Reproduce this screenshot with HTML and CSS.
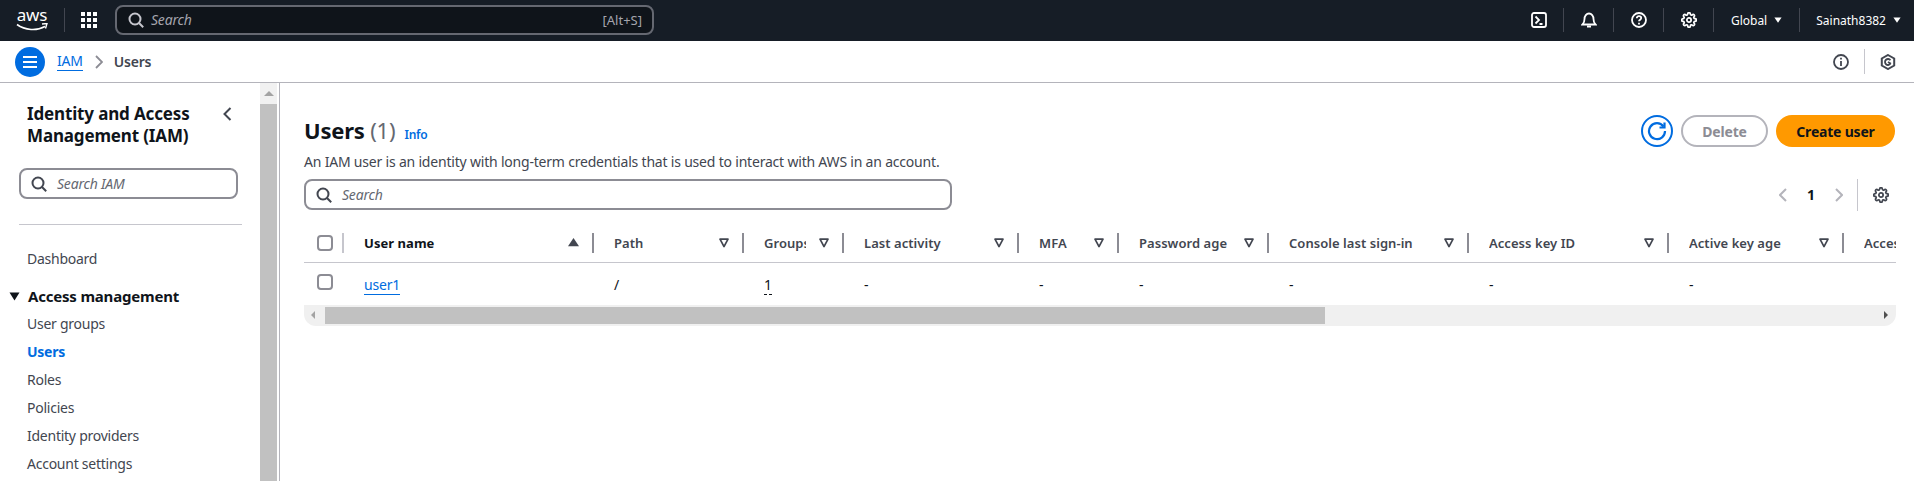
FILE: index.html
```html
<!DOCTYPE html>
<html lang="en">
<head>
  <meta charset="UTF-8">
  <meta name="viewport" content="width=device-width, initial-scale=1.0">
  <link rel="stylesheet" href="styles.css">
  <title>Users | IAM</title>
</head>
<body>
  <svg class="sprites" aria-hidden="true">
    <symbol id="gear" viewBox="0 0 24 24">
      <circle cx="12" cy="12" r="3.2" fill="none" stroke="currentColor" stroke-width="2.6"/>
      <path fill="none" stroke="currentColor" stroke-width="2.6" stroke-linejoin="round" d="M19.4 15a1.65 1.65 0 0 0 .33 1.82l.06.06a2 2 0 0 1 0 2.83 2 2 0 0 1-2.83 0l-.06-.06a1.65 1.65 0 0 0-1.82-.33 1.65 1.65 0 0 0-1 1.51V21a2 2 0 0 1-2 2 2 2 0 0 1-2-2v-.09A1.65 1.65 0 0 0 9 19.4a1.65 1.65 0 0 0-1.82.33l-.06.06a2 2 0 0 1-2.83 0 2 2 0 0 1 0-2.83l.06-.06a1.65 1.65 0 0 0 .33-1.82 1.65 1.65 0 0 0-1.51-1H3a2 2 0 0 1-2-2 2 2 0 0 1 2-2h.09A1.65 1.65 0 0 0 4.6 9a1.65 1.65 0 0 0-.33-1.82l-.06-.06a2 2 0 0 1 0-2.83 2 2 0 0 1 2.83 0l.06.06a1.65 1.65 0 0 0 1.82.33H9a1.65 1.65 0 0 0 1-1.51V3a2 2 0 0 1 2-2 2 2 0 0 1 2 2v.09a1.65 1.65 0 0 0 1 1.51 1.65 1.65 0 0 0 1.82-.33l.06-.06a2 2 0 0 1 2.83 0 2 2 0 0 1 0 2.83l-.06.06a1.65 1.65 0 0 0-.33 1.82V9a1.65 1.65 0 0 0 1.51 1H21a2 2 0 0 1 2 2 2 2 0 0 1-2 2h-.09a1.65 1.65 0 0 0-1.51 1z"/>
    </symbol>
    <symbol id="search" viewBox="0 0 16 16">
      <circle cx="7" cy="7" r="5.5" fill="none" stroke="currentColor" stroke-width="2"/>
      <path d="M11 11l4.2 4.2" fill="none" stroke="currentColor" stroke-width="2"/>
    </symbol>
    <symbol id="filter" viewBox="0 0 10 10">
      <path d="M1 1.2h8L5 8.6z" fill="none" stroke="currentColor" stroke-width="1.7" stroke-linejoin="round"/>
    </symbol>
    <symbol id="caret" viewBox="0 0 10 10">
      <path d="M0.5 2h9L5 8.5z" fill="currentColor"/>
    </symbol>
    <symbol id="caret-up" viewBox="0 0 10 10">
      <path d="M0 8.5h10L5 1z" fill="currentColor"/>
    </symbol>
  </svg>

  <header class="topbar">
    <div class="logo">
      <span class="logo-text">aws</span>
      <svg class="logo-smile" width="32" height="9" viewBox="0 0 32 9"><path d="M1 1.5c8 6 20 6.500 28 2" fill="none" stroke="#fff" stroke-width="1.600"/><path d="M26 1l5-.5-1.500 5" fill="none" stroke="#fff" stroke-width="1.400"/></svg>
    </div>
    <span class="top-sep logo-sep"></span>
    <svg class="apps" width="16" height="16" viewBox="0 0 16 16" fill="#fff">
      <rect x="0" y="0" width="4" height="4"/><rect x="6" y="0" width="4" height="4"/><rect x="12" y="0" width="4" height="4"/>
      <rect x="0" y="6" width="4" height="4"/><rect x="6" y="6" width="4" height="4"/><rect x="12" y="6" width="4" height="4"/>
      <rect x="0" y="12" width="4" height="4"/><rect x="6" y="12" width="4" height="4"/><rect x="12" y="12" width="4" height="4"/>
    </svg>
    <div class="top-search">
      <svg width="16" height="16"><use href="#search"/></svg>
      <span class="top-search-text">Search</span>
      <span class="shortcut">[Alt+S]</span>
    </div>
    <div class="top-actions">
      <svg class="top-icon" width="16" height="16" viewBox="0 0 16 16" fill="none" stroke="#fff" stroke-width="1.800"><rect x="1" y="1" width="14" height="14" rx="2"/><path d="M4.500 4.500L8 8l-3.500 3.500M8.500 12h3"/></svg>
      <span class="top-sep"></span>
      <svg class="top-icon" width="16" height="16" viewBox="0 0 16 16" fill="none" stroke="#fff" stroke-width="1.800"><path d="M1.500 12.500h13c-1.500-1.500-2-2.500-2-5.500 0-3-2-5.500-4.500-5.500S3.500 4 3.500 7c0 3-.5 4-2 5.500z"/><path d="M6 14.500h4" stroke-width="2"/></svg>
      <span class="top-sep"></span>
      <svg class="top-icon" width="16" height="16" viewBox="0 0 16 16" fill="none" stroke="#fff" stroke-width="1.800"><circle cx="8" cy="8" r="7"/><path d="M5.800 6.200C5.800 4.900 6.800 4.200 8 4.200s2.200.8 2.200 1.900c0 1.600-2.200 1.700-2.200 3.200"/><path d="M8 10.800v1.600"/></svg>
      <span class="top-sep"></span>
      <svg class="top-icon gear-white" width="16" height="16"><use href="#gear"/></svg>
      <span class="top-sep"></span>
      <button class="top-menu">Global <svg width="8" height="8"><use href="#caret"/></svg></button>
      <span class="top-sep"></span>
      <button class="top-menu">Sainath8382 <svg width="8" height="8"><use href="#caret"/></svg></button>
    </div>
  </header>

  <div class="crumbbar">
    <button class="menu-btn" aria-label="Open menu">
      <svg width="14" height="12" viewBox="0 0 14 12" fill="#fff"><rect width="14" height="2"/><rect y="5" width="14" height="2"/><rect y="10" width="14" height="2"/></svg>
    </button>
    <a class="crumb-link" href="#">IAM</a>
    <svg class="crumb-chevron" width="8" height="14" viewBox="0 0 8 14"><path d="M1 1l6 6-6 6" fill="none" stroke="#8c8c94" stroke-width="1.800"/></svg>
    <span class="crumb-current">Users</span>
    <div class="crumb-tools">
      <svg width="16" height="16" viewBox="0 0 16 16" fill="none" stroke="#424650" stroke-width="1.800"><circle cx="8" cy="8" r="7"/><path d="M8 7v5M8 3.800v1.800"/></svg>
      <span class="crumb-sep"></span>
      <svg width="16" height="16" viewBox="0 0 16 16" fill="none" stroke="#424650" stroke-width="2"><path d="M8 1l6.200 3.500v7L8 15l-6.200-3.500v-7z"/><path d="M10.400 6.200A3 3 0 1 0 10.400 9.800M8 8l3 1.800" stroke-width="1.800"/></svg>
    </div>
  </div>

  <div class="layout">
    <aside class="sidebar">
      <div class="side-head">
        <h2>Identity and Access Management (IAM)</h2>
        <svg class="side-close" width="9" height="14" viewBox="0 0 9 14"><path d="M7.500 1l-6 6 6 6" fill="none" stroke="#424650" stroke-width="2"/></svg>
      </div>
      <div class="search-box side-search">
        <svg width="16" height="16"><use href="#search"/></svg>
        <span>Search IAM</span>
      </div>
      <hr class="side-divider">
      <a class="nav-item nav-first" href="#">Dashboard</a>
      <div class="nav-section">
        <svg width="11" height="9" viewBox="0 0 11 9"><path d="M0.500 0.500h10L5.500 8.500z" fill="#0f141a"/></svg>
        Access management
      </div>
      <ul class="nav-list">
        <li><a class="nav-item" href="#">User groups</a></li>
        <li><a class="nav-item active" href="#">Users</a></li>
        <li><a class="nav-item" href="#">Roles</a></li>
        <li><a class="nav-item" href="#">Policies</a></li>
        <li><a class="nav-item" href="#">Identity providers</a></li>
        <li><a class="nav-item" href="#">Account settings</a></li>
      </ul>
    </aside>
    <div class="side-scroll">
      <div class="side-scroll-up"></div>
      <div class="side-scroll-thumb"></div>
    </div>

    <main class="main">
      <div class="page-head">
        <h1>Users <span class="count">(1)</span></h1>
        <a class="info" href="#">Info</a>
        <div class="actions">
          <button class="refresh" aria-label="Refresh">
            <svg width="20" height="20" viewBox="0 0 20 20" fill="none" stroke="#006ce0" stroke-width="2.200"><path d="M16.500 5.500A8 8 0 1 0 18 10"/><path d="M17.500 1.500v5h-5"/></svg>
          </button>
          <button class="btn-delete">Delete</button>
          <button class="btn-create">Create user</button>
        </div>
      </div>
      <p class="desc">An IAM user is an identity with long-term credentials that is used to interact with AWS in an account.</p>

      <div class="filter-row">
        <div class="search-box table-search">
          <svg width="16" height="16"><use href="#search"/></svg>
          <span>Search</span>
        </div>
        <div class="pager">
          <svg width="8" height="14" viewBox="0 0 8 14"><path d="M7 1L1 7l6 6" fill="none" stroke="#b4b4bb" stroke-width="2"/></svg>
          <span class="page-num">1</span>
          <svg width="8" height="14" viewBox="0 0 8 14"><path d="M1 1l6 6-6 6" fill="none" stroke="#b4b4bb" stroke-width="2"/></svg>
          <span class="pager-sep"></span>
          <svg class="pager-gear" width="16" height="16"><use href="#gear"/></svg>
        </div>
      </div>

      <div class="table-wrap">
        <table class="users">
          <colgroup>
            <col class="c40"><col class="c250"><col class="c150"><col class="c100"><col class="c175"><col class="c100"><col class="c150"><col class="c200"><col class="c200"><col class="c175"><col class="c200">
          </colgroup>
          <thead>
            <tr>
              <th><div class="th-in th-check"><span class="check"></span></div></th>
              <th><div class="th-in sorted"><span class="th-label">User name</span><svg width="11" height="11"><use href="#caret-up"/></svg></div></th>
              <th><div class="th-in"><span class="th-label">Path</span><svg width="10" height="10"><use href="#filter"/></svg></div></th>
              <th><div class="th-in"><span class="th-label">Groups</span><svg width="10" height="10"><use href="#filter"/></svg></div></th>
              <th><div class="th-in"><span class="th-label">Last activity</span><svg width="10" height="10"><use href="#filter"/></svg></div></th>
              <th><div class="th-in"><span class="th-label">MFA</span><svg width="10" height="10"><use href="#filter"/></svg></div></th>
              <th><div class="th-in"><span class="th-label">Password age</span><svg width="10" height="10"><use href="#filter"/></svg></div></th>
              <th><div class="th-in"><span class="th-label">Console last sign-in</span><svg width="10" height="10"><use href="#filter"/></svg></div></th>
              <th><div class="th-in"><span class="th-label">Access key ID</span><svg width="10" height="10"><use href="#filter"/></svg></div></th>
              <th><div class="th-in"><span class="th-label">Active key age</span><svg width="10" height="10"><use href="#filter"/></svg></div></th>
              <th><div class="th-in"><span class="th-label">Access key last used</span><svg width="10" height="10"><use href="#filter"/></svg></div></th>
            </tr>
          </thead>
          <tbody>
            <tr>
              <td class="td-check"><span class="check"></span></td>
              <td><a class="user-link" href="#">user1</a></td>
              <td>/</td>
              <td><span class="group-count">1</span></td>
              <td>-</td>
              <td>-</td>
              <td>-</td>
              <td>-</td>
              <td>-</td>
              <td>-</td>
              <td></td>
            </tr>
          </tbody>
        </table>
      </div>
      <div class="h-scroll">
        <span class="arrow-left"></span>
        <div class="h-thumb"></div>
        <span class="arrow-right"></span>
      </div>
    </main>
  </div>
</body>
</html>
```

FILE: styles.css
```css
* {
  box-sizing: border-box;
}

html, body {
  height: 100%;
}

body {
  margin: 0;
  font-family: "Noto Sans", Arial, sans-serif;
  font-size: 14px;
  line-height: 20px;
  letter-spacing: -0.2px;
  color: #0f141a;
  background-color: #fff;
  overflow: hidden;
}

a {
  text-decoration: none;
}

button {
  font-family: inherit;
  letter-spacing: inherit;
  cursor: pointer;
}

.sprites {
  display: none;
}

/* Top bar */
.topbar {
  height: 41px;
  background-color: #161d26;
  display: flex;
  align-items: center;
  color: #fff;
  padding-bottom: 1px;
}

.logo {
  width: 32px;
  height: 24px;
  margin-left: 16px;
  position: relative;
}

.logo-text {
  display: block;
  font-size: 17px;
  line-height: 17px;
  text-align: center;
  margin-top: -2px;
}

.logo-smile {
  position: absolute;
  left: 0;
  top: 15px;
}

.top-sep {
  width: 1px;
  height: 24px;
  background-color: #424650;
}

.logo-sep {
  margin-left: 16px;
}

.apps {
  margin-left: 16px;
}

.top-search {
  width: 539px;
  height: 30px;
  margin-left: 18px;
  padding: 0 10px 0 11px;
  background-color: #0f141a;
  border: 2px solid #656871;
  border-radius: 8px;
  display: flex;
  align-items: center;
  color: #c6c6cd;
}

.top-search-text {
  margin-left: 7px;
  font-style: italic;
  font-size: 14px;
  color: #a4a4ad;
}

.shortcut {
  margin-left: auto;
  font-size: 13px;
  letter-spacing: 0;
  color: #a4a4ad;
}

.top-actions {
  margin-left: auto;
  display: flex;
  align-items: center;
  gap: 16.5px;
  padding-right: 13px;
}

.top-icon {
  display: block;
}

.gear-white {
  color: #fff;
}

.top-menu {
  background: none;
  border: none;
  padding: 0;
  color: #fff;
  font-size: 12px;
  letter-spacing: 0;
  display: flex;
  align-items: center;
  gap: 7px;
}

/* Breadcrumb bar */
.crumbbar {
  height: 42px;
  border-bottom: 1px solid #b4b4bb;
  display: flex;
  align-items: center;
  padding: 0 18px 0 15px;
}

.menu-btn {
  width: 30px;
  height: 30px;
  border: none;
  border-radius: 50%;
  background-color: #006ce0;
  padding: 0;
  display: flex;
  align-items: center;
  justify-content: center;
}

.crumb-link {
  margin-left: 12px;
  color: #006ce0;
  border-bottom: 1px solid #006ce0;
  font-size: 14px;
  line-height: 18px;
}

.crumb-chevron {
  margin-left: 12px;
}

.crumb-current {
  margin-left: 11px;
  color: #424650;
  font-weight: 600;
  font-size: 14px;
}

.crumb-tools {
  margin-left: auto;
  display: flex;
  align-items: center;
  gap: 15px;
}

.crumb-sep {
  width: 1px;
  height: 25px;
  background-color: #c6c6cd;
}

/* Side navigation */
.layout {
  display: flex;
  height: calc(100vh - 83px);
}

.sidebar {
  width: 260px;
  flex: none;
  padding: 20px 18px 0 0;
  overflow: hidden;
}

.side-head {
  display: flex;
  justify-content: space-between;
  padding: 0 10px 0 27px;
}

.side-head h2 {
  margin: 0;
  width: 180px;
  font-size: 17px;
  line-height: 22px;
  font-weight: 700;
  letter-spacing: -0.15px;
}

.side-close {
  margin-top: 4px;
}

.search-box {
  height: 31px;
  border: 2px solid #8c8c94;
  border-radius: 8px;
  display: flex;
  align-items: center;
  gap: 10px;
  padding-left: 10px;
  font-style: italic;
  font-size: 14px;
  color: #656871;
}

.search-box svg {
  color: #424650;
  flex: none;
}

.side-search {
  width: 219px;
  margin: 21px 0 0 19px;
}

.side-divider {
  margin: 25px 0 0 19px;
  width: 223px;
  border: none;
  border-top: 1px solid #c6c6cd;
}

.nav-item {
  display: block;
  padding-left: 27px;
  color: #424650;
  font-size: 14px;
  line-height: 28px;
  letter-spacing: -0.25px;
}

.nav-first {
  margin-top: 20px;
}

.nav-item.active {
  color: #006ce0;
  font-weight: 700;
}

.nav-section {
  margin-top: 11px;
  padding-left: 9px;
  display: flex;
  align-items: center;
  gap: 8px;
  font-size: 15px;
  line-height: 24px;
  font-weight: 700;
}

.nav-list {
  list-style: none;
  margin: 2px 0 0;
  padding: 0;
}

.side-scroll {
  width: 17px;
  flex: none;
  background-color: #f1f1f1;
  display: flex;
  flex-direction: column;
}

.side-scroll-up {
  height: 21px;
  display: flex;
  align-items: center;
  justify-content: center;
}

.side-scroll-up::before {
  content: "";
  border: 5px solid transparent;
  border-top: 0;
  border-bottom: 5px solid #a3a3a3;
}

.side-scroll-thumb {
  flex: 1;
  background-color: #c1c1c1;
}

/* Main content */
.main {
  flex: 1;
  margin-left: 2px;
  border-left: 1px solid #b4b4bb;
  padding: 32px 18px 0 24px;
  min-width: 0;
}

.page-head {
  display: flex;
  align-items: center;
  height: 32px;
}

.page-head h1 {
  margin: -2px 0 0;
  font-size: 22px;
  line-height: 32px;
  font-weight: 700;
}

.count {
  font-weight: 400;
  color: #656871;
}

.info {
  margin-left: 9px;
  margin-top: 7px;
  color: #006ce0;
  font-size: 12px;
  font-weight: 600;
}

.actions {
  margin-left: auto;
  display: flex;
  align-items: center;
  gap: 8px;
  margin-right: 1px;
}

.refresh {
  width: 32px;
  height: 32px;
  padding: 0;
  background: #fff;
  border: 2px solid #006ce0;
  border-radius: 50%;
  display: flex;
  align-items: center;
  justify-content: center;
}

.btn-delete, .btn-create {
  height: 32px;
  border-radius: 16px;
  font-size: 14px;
  font-weight: 700;
  padding: 0;
}

.btn-delete {
  width: 87px;
  background: #fff;
  border: 2px solid #b4b4bb;
  color: #8c8c94;
}

.btn-create {
  width: 119px;
  background-color: #ff9900;
  border: none;
  color: #0f141a;
}

.desc {
  margin: 5px 0 0;
  color: #424650;
  font-size: 14px;
}

.filter-row {
  margin-top: 7px;
  display: flex;
  align-items: flex-start;
  justify-content: space-between;
  height: 32px;
}

.table-search {
  width: 648px;
}

.pager {
  display: flex;
  align-items: center;
  height: 32px;
  margin-right: 7px;
}

.page-num {
  margin: 0 20px;
  width: 8px;
  font-weight: 700;
  color: #0f141a;
}

.pager-sep {
  width: 1px;
  height: 32px;
  margin: 0 15px 0 14px;
  background-color: #c6c6cd;
}

.pager-gear {
  color: #424650;
}

/* Users table */
.table-wrap {
  margin-top: 13px;
  overflow: hidden;
}

.users {
  border-collapse: collapse;
  table-layout: fixed;
  width: 1740px;
}

.c40 { width: 40px; }
.c100 { width: 100px; }
.c150 { width: 150px; }
.c175 { width: 175px; }
.c200 { width: 200px; }
.c250 { width: 250px; }

.users th {
  height: 38px;
  padding: 0;
  border-bottom: 1px solid #c6c6cd;
  text-align: left;
  font-size: 13px;
  font-weight: 600;
  letter-spacing: 0.05px;
  color: #424650;
}

.th-in {
  height: 20px;
  display: flex;
  align-items: center;
  padding: 0 13px 0 20px;
  border-right: 2px solid #8c8c94;
  gap: 13px;
}

.th-in svg {
  flex: none;
}

.th-label {
  flex: 1;
  min-width: 0;
  overflow: hidden;
  white-space: nowrap;
}

.th-check {
  padding: 0 0 0 13px;
  border-right: 2px solid #c6c6cd;
}

.sorted .th-label {
  color: #0f141a;
  font-weight: 700;
}

.check {
  display: block;
  width: 16px;
  height: 16px;
  border: 2px solid #8c8c94;
  border-radius: 4px;
}

.users td {
  height: 43px;
  padding: 2px 0 0 20px;
  color: #0f141a;
  font-size: 14px;
  vertical-align: middle;
}

.users td.td-check {
  padding: 0 0 3px 13px;
}

.user-link {
  color: #006ce0;
  border-bottom: 1px solid #006ce0;
  line-height: 18px;
  display: inline-block;
}

.group-count {
  border-bottom: 1px dashed #0f141a;
  display: inline-block;
  line-height: 18px;
}

.h-scroll {
  height: 21px;
  background-color: #f0f0f0;
  border-radius: 0 0 12px 12px;
  display: flex;
  align-items: center;
  position: relative;
}

.h-thumb {
  margin-left: 21px;
  width: 1000px;
  height: 17px;
  background-color: #c1c1c1;
}

.arrow-left, .arrow-right {
  position: absolute;
  top: 6px;
  border: 4px solid transparent;
}

.arrow-left {
  left: 7px;
  border-left: 0;
  border-right: 4px solid #a3a3a3;
}

.arrow-right {
  right: 8px;
  border-right: 0;
  border-left: 4px solid #505050;
}
```
